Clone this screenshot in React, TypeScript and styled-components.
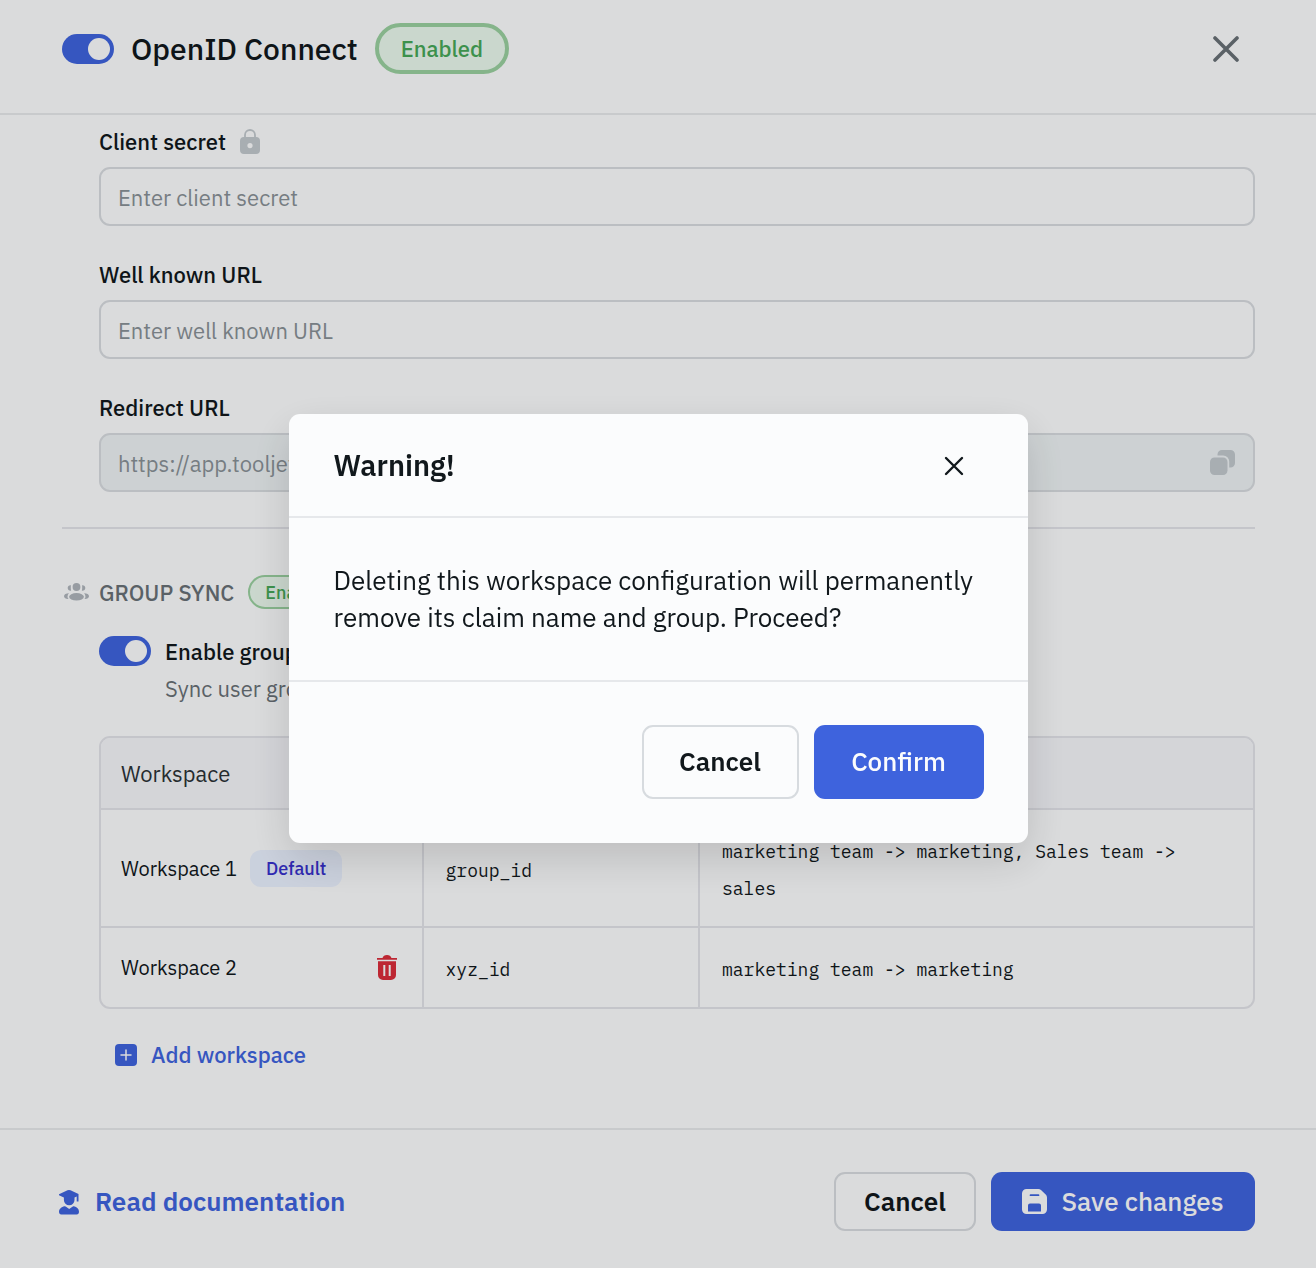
import React from "react";
import styled, { createGlobalStyle } from "styled-components";

const sans = `"IBM Plex Sans", Inter, "Noto Sans", sans-serif`;
const mono = `"IBM Plex Mono", "Liberation Mono", monospace`;

const color = {
  surface: "#fbfcfd",
  ink: "#11181c",
  inkSoft: "#2b3236",
  muted: "#687076",
  placeholder: "#889096",
  icon: "#c1c8cd",
  line: "#e6e8eb",
  tableLine: "#e2e3e9",
  field: "#d7dbdf",
  disabled: "#ecf1f3",
  primary: "#3e63dd",
  danger: "#d92d3b",
  green: "#46a758",
  greenLine: "#99cf9f",
  greenFill: "#e9f7ec",
};

const GlobalStyle = createGlobalStyle`
  *, *::before, *::after { box-sizing: border-box; }
  body {
    margin: 0;
    background: ${color.surface};
    color: ${color.ink};
    font-family: ${sans};
    font-size: 22px;
    line-height: 37px;
  }
  button, input { font: inherit; color: inherit; }
`;

const Page = styled.div`
  display: flex;
  flex-direction: column;
  min-height: 100vh;
`;

const Header = styled.header`
  display: flex;
  align-items: center;
  gap: 17px;
  padding: 23px 61px 39px 62px;
  border-bottom: 2px solid ${color.line};
`;

const Title = styled.h1`
  margin: 0;
  font-size: 30px;
  font-weight: 500;
`;

const Badge = styled.span<{ $large?: boolean }>`
  display: inline-flex;
  align-items: center;
  justify-content: center;
  height: ${(p) => (p.$large ? 51 : 34)}px;
  padding: 0 ${(p) => (p.$large ? 22 : 15)}px;
  border: ${(p) => (p.$large ? 4 : 2)}px solid ${color.greenLine};
  border-radius: 26px;
  background: ${color.greenFill};
  color: ${color.green};
  font-size: ${(p) => (p.$large ? 22 : 18)}px;
  font-weight: 500;
`;

const IconButton = styled.button<{ $push?: boolean; $width?: number }>`
  display: inline-flex;
  align-items: center;
  justify-content: center;
  margin: 0 0 0 ${(p) => (p.$push ? "auto" : "0")};
  padding: 0;
  min-width: ${(p) => p.$width ?? 25}px;
  border: 0;
  background: none;
  cursor: pointer;
`;

const Switch = styled.input`
  appearance: none;
  flex: none;
  display: flex;
  align-items: center;
  justify-content: flex-end;
  width: 52px;
  height: 30px;
  margin: 0;
  padding: 4px;
  border-radius: 15px;
  background: ${color.primary};
  cursor: pointer;
  &::after {
    content: "";
    width: 22px;
    height: 22px;
    border-radius: 50%;
    background: ${color.surface};
  }
  &:not(:checked) {
    justify-content: flex-start;
    background: ${color.icon};
  }
`;

const Main = styled.main`
  flex: 1;
  padding: 8px 61px 55px 62px;
`;

const Section = styled.div`
  display: flex;
  flex-direction: column;
  gap: 30px;
  padding-left: 37px;
`;

const Field = styled.div`
  display: flex;
  flex-direction: column;
  gap: 7px;
`;

const FieldHead = styled.div`
  display: flex;
  align-items: center;
  gap: 14px;
`;

const Label = styled.label`
  font-weight: 500;
`;

const InputBox = styled.div<{ $disabled?: boolean }>`
  display: flex;
  align-items: center;
  height: 59px;
  padding: 0 18px 0 17px;
  border: 2px solid ${color.field};
  border-radius: 11px;
  background: ${(p) => (p.$disabled ? color.disabled : "transparent")};
`;

const TextInput = styled.input`
  flex: 1;
  min-width: 0;
  padding: 2px 0 0;
  border: 0;
  outline: 0;
  background: none;
  color: ${color.placeholder};
  &::placeholder {
    color: ${color.placeholder};
    opacity: 1;
  }
`;

const Divider = styled.hr`
  height: 2px;
  margin: 35px 0 46px;
  border: 0;
  background: ${color.tableLine};
`;

const GroupHead = styled.div`
  display: flex;
  align-items: center;
  gap: 14px;
  height: 34px;
  margin-bottom: 25px;
`;

const GroupTitle = styled.h2`
  display: flex;
  align-items: center;
  gap: 10px;
  margin: 0;
  padding-left: 2px;
  color: ${color.muted};
  font-size: 22px;
  font-weight: 500;
`;

const SwitchRow = styled.div`
  display: flex;
  align-items: flex-start;
  gap: 14px;
  margin: 0 0 28px 37px;
  padding-top: 2px;
`;

const SwitchText = styled.div`
  display: flex;
  flex-direction: column;
  margin: -3px 0 1px;
`;

const Hint = styled.span`
  color: ${color.muted};
`;

const TableFrame = styled.div`
  margin-left: 37px;
  border: 2px solid ${color.tableLine};
  border-radius: 11px;
  overflow: hidden;
`;

const Table = styled.table`
  width: 100%;
  table-layout: fixed;
  border-collapse: separate;
  border-spacing: 0;
  text-align: left;
`;

const HeadCell = styled.th<{ $width: string }>`
  width: ${(p) => p.$width};
  height: 72px;
  padding: 17px 22px 16px 20px;
  border-bottom: 2px solid ${color.tableLine};
  background: #f4f5f9;
  color: ${color.inkSoft};
  font-size: 22px;
  font-weight: 400;
`;

const Cell = styled.td<{ $code?: boolean }>`
  padding: ${(p) => (p.$code ? "23px 22px 19px" : "21px 22px 21px 20px")};
  border-right: 2px solid ${color.tableLine};
  border-bottom: 2px solid ${color.tableLine};
  font-family: ${(p) => (p.$code ? mono : sans)};
  font-size: ${(p) => (p.$code ? 18 : 20)}px;
  &:last-child { border-right: 0; }
  tr:last-child > & { border-bottom: 0; }
`;

const WorkspaceName = styled.div`
  display: flex;
  align-items: center;
  gap: 13px;
`;

const DefaultTag = styled.span`
  padding: 0 16px;
  border-radius: 11px;
  background: #e9f0fe;
  color: #3730cc;
  font-size: 18px;
  font-weight: 500;
`;

const AddButton = styled.button`
  display: flex;
  align-items: center;
  gap: 14px;
  margin: 27px 0 0 53px;
  padding: 0;
  border: 0;
  background: none;
  color: ${color.primary};
  font-weight: 500;
  cursor: pointer;
`;

const Footer = styled.footer`
  display: flex;
  align-items: center;
  gap: 15px;
  padding: 42px 61px 37px 57px;
  border-top: 2px solid ${color.line};
`;

const DocLink = styled.a`
  display: flex;
  align-items: center;
  gap: 14px;
  margin-right: auto;
  color: ${color.primary};
  font-size: 26px;
  font-weight: 600;
  text-decoration: none;
`;

const Button = styled.button<{ $primary?: boolean; $tall?: boolean; $width: number }>`
  display: inline-flex;
  align-items: center;
  justify-content: center;
  gap: 14px;
  min-width: ${(p) => p.$width}px;
  height: ${(p) => (p.$tall ? 74 : 59)}px;
  padding: 0 22px ${(p) => (p.$tall ? 2 : 0)}px;
  border: ${(p) => (p.$primary ? "0" : `2px solid ${color.field}`)};
  border-radius: 11px;
  background: ${(p) => (p.$primary ? color.primary : color.surface)};
  color: ${(p) => (p.$primary ? color.surface : color.ink)};
  font-size: 26px;
  font-weight: ${(p) => (p.$primary ? 500 : 600)};
  cursor: pointer;
`;

const Backdrop = styled.div`
  position: fixed;
  inset: 0;
  display: flex;
  align-items: center;
  justify-content: center;
  padding-bottom: 11px;
  background: rgba(0, 0, 0, 0.13);
`;

const Dialog = styled.section`
  width: 739px;
  max-width: 90vw;
  border-radius: 11px;
  background: ${color.surface};
  box-shadow: 0 16px 44px rgba(0, 0, 0, 0.14);
`;

const DialogHead = styled.div`
  display: flex;
  align-items: center;
  padding: 33px 44px 32px 45px;
  border-bottom: 2px solid ${color.line};
`;

const DialogTitle = styled.h2`
  margin: 0;
  font-size: 29px;
  font-weight: 600;
`;

const DialogText = styled.p`
  margin: 0;
  padding: 44px 44px 44px 45px;
  border-bottom: 2px solid ${color.line};
  font-size: 26px;
`;

const DialogActions = styled.div`
  display: flex;
  justify-content: flex-end;
  gap: 15px;
  padding: 43px 44px 44px;
`;

const CloseIcon = ({ size, stroke, width }: { size: number; stroke: string; width: number }) => (
  <svg width={size} height={size} viewBox={`0 0 ${size} ${size}`} fill="none" stroke={stroke} strokeWidth={width} strokeLinecap="round" aria-hidden="true">
    <path d={`M2 2L${size - 2} ${size - 2}M${size - 2} 2L2 ${size - 2}`} />
  </svg>
);

const LockIcon = () => (
  <svg width="20" height="25" viewBox="0 0 20 25" fill="none" aria-hidden="true">
    <path d="M5 9V6a5 5 0 0 1 10 0v3" stroke={color.icon} strokeWidth="1.8" />
    <path fillRule="evenodd" fill={color.icon} d="M4 8h12a4 4 0 0 1 4 4v9a4 4 0 0 1-4 4H4a4 4 0 0 1-4-4v-9a4 4 0 0 1 4-4zm6 6a2.6 2.6 0 1 0 0 5.200 2.600 2.600 0 0 0 0-5.200z" />
  </svg>
);

const CopyIcon = () => (
  <svg width="25" height="25" viewBox="0 0 25 25" fill={color.icon} aria-hidden="true">
    <path d="M7.500 5.500V4.500A4.500 4.500 0 0 1 12 0h8.500A4.500 4.500 0 0 1 25 4.500V13a4.500 4.500 0 0 1-4.500 4.500h-1.300V11.500a6 6 0 0 0-6-6z" />
    <rect y="7.500" width="17.500" height="17.500" rx="4.500" />
  </svg>
);

const UsersIcon = () => (
  <svg width="25" height="18" viewBox="0 0 25 18" fill="#aeb4bb" aria-hidden="true">
    <circle cx="12.500" cy="4" r="3.900" />
    <ellipse cx="12.500" cy="13.800" rx="7.400" ry="3.700" />
    <path d="M7 2.200C4.800 2 3.700 3.300 3.700 5s1.200 3 3.500 2.800C6.800 7 6.600 3.600 7 2.200zM18 2.200c2.200-.2 3.300 1.100 3.300 2.800s-1.200 3-3.500 2.800c.4-.8.6-4.200.2-5.600zM5 10.200c-3 0-5 1.300-5 3s2 3 4.500 2.800c-1.500-1.600-1.200-4.200.5-5.800zM20 10.200c3 0 5 1.300 5 3s-2 3-4.500 2.800c1.500-1.600 1.200-4.200-.5-5.800z" />
  </svg>
);

const TrashIcon = () => (
  <svg width="20" height="25" viewBox="0 0 20 25" fill={color.danger} aria-hidden="true">
    <path d="M0 3h5.500C6.200 1 7.500 0 10 0s3.800 1 4.500 3H20v1.800H0z" />
    <path fillRule="evenodd" d="M1 6.300h18V20a5 5 0 0 1-5 5H6a5 5 0 0 1-5-5zM6.300 10v11h2V10zM11.700 10v11h2V10z" />
  </svg>
);

const PlusIcon = () => (
  <svg width="22" height="22" viewBox="0 0 22 22" aria-hidden="true">
    <rect width="22" height="22" rx="4" fill={color.primary} />
    <path d="M11 6v10M6 11h10" stroke={color.surface} strokeWidth="1.500" strokeLinecap="round" />
  </svg>
);

const GraduateIcon = () => (
  <svg width="24" height="26" viewBox="0 0 24 26" fill={color.primary} aria-hidden="true">
    <path d="M2 5.200 10.500 1.300a4 4 0 0 1 3 0L21.500 5v7.600h-1.800V7.500L17.500 8.500v2.400a5.300 5.300 0 0 1-10.600 0V8.400L2 6.200z" />
    <path d="M7.500 17.300a1.500 1.500 0 0 1 1.500.4l3.200 2.400 3.200-2.400a1.500 1.500 0 0 1 1.500-.4c3 .8 5.100 2.700 5.100 5.500 0 1.600-.8 2.700-2.300 2.700H4.300C2.800 25.500 2 24.400 2 22.800c0-2.800 2.500-4.700 5.500-5.500z" />
  </svg>
);

const SaveIcon = () => (
  <svg width="25" height="25" viewBox="0 0 25 25" fill={color.surface} aria-hidden="true">
    <path fillRule="evenodd" d="M4.500 0h11.700a4 4 0 0 1 2.800 1.100l4.700 4.500A4 4 0 0 1 25 8.400v12.100a4.500 4.500 0 0 1-4.500 4.500h-16A4.500 4.500 0 0 1 0 20.500v-16A4.500 4.500 0 0 1 4.500 0zM8.500 5.300a.8.8 0 0 0 0 1.700h8a.8.8 0 0 0 0-1.700zM8 14.500a2 2 0 0 0-2 2v6h13v-6a2 2 0 0 0-2-2z" />
  </svg>
);

export default function App() {
  return (
    <>
      <GlobalStyle />
      <Page>
        <Header>
          <Switch type="checkbox" id="oidc" defaultChecked />
          <Title><label htmlFor="oidc">OpenID Connect</label></Title>
          <Badge $large>Enabled</Badge>
          <IconButton $push $width={58} type="button" aria-label="Close">
            <CloseIcon size={26} stroke={color.muted} width={3.6} />
          </IconButton>
        </Header>

        <Main>
          <Section>
            <Field>
              <FieldHead>
                <Label htmlFor="secret">Client secret</Label>
                <LockIcon />
              </FieldHead>
              <InputBox>
                <TextInput id="secret" placeholder="Enter client secret" />
              </InputBox>
            </Field>
            <Field>
              <Label htmlFor="wellknown">Well known URL</Label>
              <InputBox>
                <TextInput id="wellknown" placeholder="Enter well known URL" />
              </InputBox>
            </Field>
            <Field>
              <Label htmlFor="redirect">Redirect URL</Label>
              <InputBox $disabled>
                <TextInput id="redirect" readOnly defaultValue="https://app.tooljet.com/sso/openid" />
                <IconButton type="button" aria-label="Copy redirect URL">
                  <CopyIcon />
                </IconButton>
              </InputBox>
            </Field>
          </Section>

          <Divider />

          <GroupHead>
            <GroupTitle>
              <UsersIcon />
              GROUP SYNC
            </GroupTitle>
            <Badge>Enabled</Badge>
          </GroupHead>
          <SwitchRow>
            <Switch type="checkbox" id="groupsync" defaultChecked />
            <SwitchText>
              <Label htmlFor="groupsync">Enable group sync</Label>
              <Hint>Sync user groups</Hint>
            </SwitchText>
          </SwitchRow>

          <TableFrame>
            <Table>
              <thead>
                <tr>
                  <HeadCell $width="28%">Workspace</HeadCell>
                  <HeadCell $width="24%" aria-label="Claim name" />
                  <HeadCell $width="48%" aria-label="Group mapping" />
                </tr>
              </thead>
              <tbody>
                <tr>
                  <Cell>
                    <WorkspaceName>
                      Workspace 1<DefaultTag>Default</DefaultTag>
                    </WorkspaceName>
                  </Cell>
                  <Cell $code>group_id</Cell>
                  <Cell $code>marketing team -&gt; marketing, Sales team -&gt; sales</Cell>
                </tr>
                <tr>
                  <Cell>
                    <WorkspaceName>
                      Workspace 2
                      <IconButton $push type="button" aria-label="Delete Workspace 2">
                        <TrashIcon />
                      </IconButton>
                    </WorkspaceName>
                  </Cell>
                  <Cell $code>xyz_id</Cell>
                  <Cell $code>marketing team -&gt; marketing</Cell>
                </tr>
              </tbody>
            </Table>
          </TableFrame>

          <AddButton type="button">
            <PlusIcon />
            Add workspace
          </AddButton>
        </Main>

        <Footer>
          <DocLink href="#documentation">
            <GraduateIcon />
            Read documentation
          </DocLink>
          <Button type="button" $width={142}>Cancel</Button>
          <Button type="button" $primary $width={264}>
            <SaveIcon />
            Save changes
          </Button>
        </Footer>
      </Page>

      <Backdrop>
        <Dialog role="dialog" aria-modal="true" aria-labelledby="warning-title">
          <DialogHead>
            <DialogTitle id="warning-title">Warning!</DialogTitle>
            <IconButton $push $width={60} type="button" aria-label="Close warning">
              <CloseIcon size={20} stroke={color.ink} width={2.4} />
            </IconButton>
          </DialogHead>
          <DialogText>
            Deleting this workspace configuration will permanently remove its claim name and group. Proceed?
          </DialogText>
          <DialogActions>
            <Button type="button" $tall $width={157}>Cancel</Button>
            <Button type="button" $primary $tall $width={170}>Confirm</Button>
          </DialogActions>
        </Dialog>
      </Backdrop>
    </>
  );
}
